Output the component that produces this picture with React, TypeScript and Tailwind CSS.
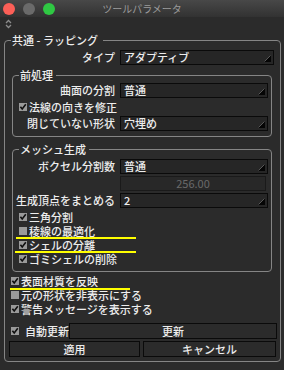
import React from "react";

function Tri() {
  return (
    <svg width="7" height="7" viewBox="0 0 7 7" className="absolute right-[2px] bottom-[2px]">
      <path d="M7 0 L7 7 L0 7 Z" fill="#050505" />
      <path d="M0.5 6.5 L6.5 0.5" stroke="#6a6a6a" strokeWidth="0.8" />
    </svg>
  );
}

function Select({ text, wide }: { text: string; wide?: boolean }) {
  return (
    <div
      className={
        (wide ? "w-[154px]" : "w-[148px]") +
        " relative ml-[5px] h-[15px] border border-[#0a0a0a] bg-[#262626] pl-[3px] leading-[13px] whitespace-nowrap"
      }
    >
      {text}
      <Tri />
    </div>
  );
}

function Check({ checked }: { checked: boolean }) {
  return (
    <svg width="8" height="8" viewBox="0 0 8 8" className="shrink-0">
      <rect x="0" y="0" width="8" height="8" fill="#9a9a9a" />
      {checked && <path d="M1.4 3.8 L3.2 6 L6.8 1.3" stroke="#101010" strokeWidth="1.6" fill="none" />}
    </svg>
  );
}

function CheckRow({ label, checked }: { label: string; checked: boolean }) {
  return (
    <div className="flex h-[14px] items-center pl-[6px]">
      <Check checked={checked} />
      <span className="ml-[2px] whitespace-nowrap leading-[14px]">{label}</span>
    </div>
  );
}

function InnerRow({ label, value, mt }: { label: string; value: string; mt: string }) {
  return (
    <div className={mt + " flex h-[15px]"}>
      <div className="w-[102px] text-right leading-[15px] whitespace-nowrap">{label}</div>
      <Select text={value} />
    </div>
  );
}

export default function App() {
  return (
    <div className="relative flex h-[370px] w-[284px] flex-col overflow-hidden bg-[#2b2b2b] font-['Noto_Sans_CJK_JP','Noto_Sans',sans-serif] text-[11px] font-medium leading-[14px] text-[#ededed]">
      {/* title bar */}
      <div className="grid h-[17px] shrink-0 grid-cols-[1fr_auto_1fr] items-center bg-gradient-to-b from-[#484848] to-[#323232]">
        <div className="flex items-center gap-[8px] pl-[3px]">
          <div className="h-[12px] w-[12px] rounded-full bg-[#fc5f57]" />
          <div className="h-[12px] w-[12px] rounded-full bg-[#6a6a6a]" />
          <div className="h-[12px] w-[12px] rounded-full bg-[#2fc843]" />
        </div>
        <div className="text-[10px] font-normal leading-[17px] text-[#9c9c9c]">ツールパラメータ</div>
        <div />
      </div>

      {/* collapse arrows */}
      <div className="h-[16px] shrink-0 pl-[5px] pt-[2px]">
        <svg width="7" height="10" viewBox="0 0 7 10">
          <path d="M1 4 L3.5 1.5 L6 4" stroke="#8c8c8c" strokeWidth="1.3" fill="none" />
          <path d="M1 6 L3.5 8.5 L6 6" stroke="#8c8c8c" strokeWidth="1.3" fill="none" />
        </svg>
      </div>

      <fieldset className="mx-[4px] w-[276px] rounded-[4px] border border-[#858585] p-0 pb-[4px]">
        <legend className="ml-[6px] h-[14px] pl-[1px] pr-[5px] leading-[14px]">共通 - ラッピング</legend>

        <div className="mt-[3px] flex h-[15px]">
          <div className="w-[110px] text-right leading-[15px]">タイプ</div>
          <Select text="アダプティブ" wide />
        </div>

        <fieldset className="mt-[3px] ml-[7px] w-[260px] rounded-[4px] border border-[#858585] p-0 pb-[5px]">
          <legend className="ml-[6px] h-[14px] pl-[1px] pr-[3px] leading-[14px]">前処理</legend>
          <InnerRow label="曲面の分割" value="普通" mt="mt-[1px]" />
          <div className="mt-[2px]">
            <CheckRow label="法線の向きを修正" checked />
          </div>
          <InnerRow label="閉じていない形状" value="穴埋め" mt="mt-[2px]" />
        </fieldset>

        <fieldset className="mt-[5px] ml-[7px] w-[260px] rounded-[4px] border border-[#858585] p-0 pb-[5px]">
          <legend className="ml-[6px] h-[14px] pl-[1px] pr-[3px] leading-[14px]">メッシュ生成</legend>
          <InnerRow label="ボクセル分割数" value="普通" mt="mt-[3px]" />
          <div className="mt-[2px] ml-[107px] h-[15px] w-[146px] border border-[#1a1a1a] bg-[#282828] text-center font-normal leading-[13px] text-[#6a6a6a]">
            256.00
          </div>
          <InnerRow label="生成頂点をまとめる" value="2" mt="mt-[2px]" />
          <div className="mt-[2px] flex flex-col">
            <CheckRow label="三角分割" checked />
            <CheckRow label="稜線の最適化" checked={false} />
            <CheckRow label="シェルの分離" checked />
            <CheckRow label="ゴミシェルの削除" checked />
          </div>
        </fieldset>

        <div className="mt-[2px] flex flex-col">
          <CheckRow label="表面材質を反映" checked />
          <CheckRow label="元の形状を非表示にする" checked={false} />
          <CheckRow label="警告メッセージを表示する" checked />
        </div>

        <div className="mt-[7px] flex h-[16px] items-center">
          <div className="ml-[6px]">
            <Check checked />
          </div>
          <span className="ml-[6px] whitespace-nowrap">自動更新</span>
          <div className="mr-[3px] ml-auto h-[16px] w-[208px] border border-[#0a0a0a] text-center leading-[14px]">更新</div>
        </div>

        <div className="mt-[2px] flex h-[16px]">
          <div className="ml-[4px] h-[16px] w-[131px] border border-[#0a0a0a] text-center leading-[14px]">適用</div>
          <div className="ml-[3px] h-[16px] w-[133px] border border-[#0a0a0a] text-center leading-[14px]">キャンセル</div>
        </div>
      </fieldset>

      {/* yellow annotation underlines */}
      <div className="absolute top-[237px] left-[16px] h-[2px] w-[120px] bg-[#ffff00]" />
      <div className="absolute top-[251px] left-[15px] h-[2px] w-[121px] bg-[#ffff00]" />
      <div className="absolute top-[288px] left-[10px] h-[2px] w-[120px] bg-[#ffff00]" />
    </div>
  );
}
